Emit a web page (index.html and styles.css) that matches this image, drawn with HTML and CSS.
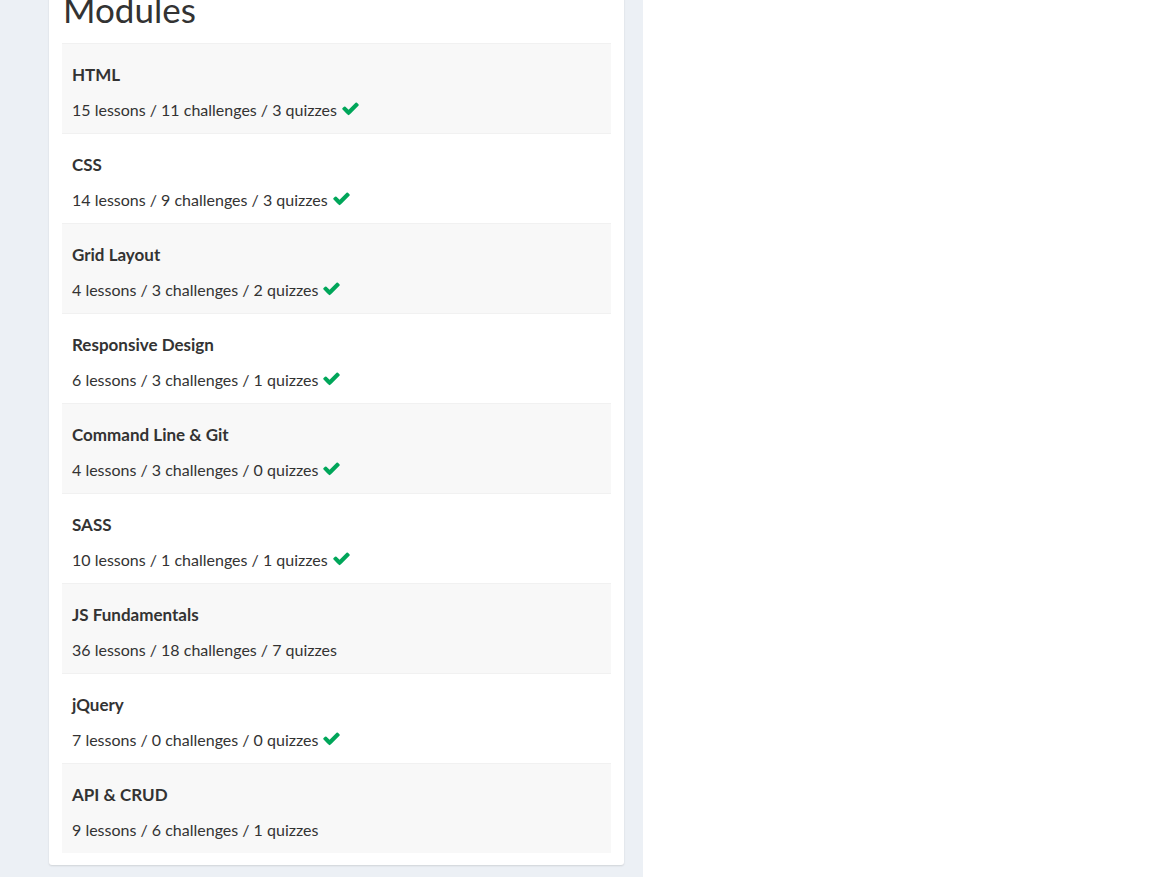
FILE: index.html
```html
<!DOCTYPE html>
<html>
<head>
<meta charset="utf-8">
<link rel="stylesheet" href="styles.css">
</head>
<body>
<div class="page">
  <div class="content">
    <div class="box">
      <h1 class="title">Modules</h1>
      <ul class="modules">
        <li class="module"><h4>HTML</h4><p>15 lessons / 11 challenges / 3 quizzes <svg class="check" viewBox="0 0 1792 1792"><path d="M1671 566q0 40-28 68l-724 724-136 136q-28 28-68 28t-68-28l-136-136-362-362q-28-28-28-68t28-68l136-136q28-28 68-28t68 28l294 295 656-657q28-28 68-28t68 28l136 136q28 28 28 68z"/></svg></p></li>
        <li class="module"><h4>CSS</h4><p>14 lessons / 9 challenges / 3 quizzes <svg class="check" viewBox="0 0 1792 1792"><path d="M1671 566q0 40-28 68l-724 724-136 136q-28 28-68 28t-68-28l-136-136-362-362q-28-28-28-68t28-68l136-136q28-28 68-28t68 28l294 295 656-657q28-28 68-28t68 28l136 136q28 28 28 68z"/></svg></p></li>
        <li class="module"><h4>Grid Layout</h4><p>4 lessons / 3 challenges / 2 quizzes <svg class="check" viewBox="0 0 1792 1792"><path d="M1671 566q0 40-28 68l-724 724-136 136q-28 28-68 28t-68-28l-136-136-362-362q-28-28-28-68t28-68l136-136q28-28 68-28t68 28l294 295 656-657q28-28 68-28t68 28l136 136q28 28 28 68z"/></svg></p></li>
        <li class="module"><h4>Responsive Design</h4><p>6 lessons / 3 challenges / 1 quizzes <svg class="check" viewBox="0 0 1792 1792"><path d="M1671 566q0 40-28 68l-724 724-136 136q-28 28-68 28t-68-28l-136-136-362-362q-28-28-28-68t28-68l136-136q28-28 68-28t68 28l294 295 656-657q28-28 68-28t68 28l136 136q28 28 28 68z"/></svg></p></li>
        <li class="module"><h4>Command Line &amp; Git</h4><p>4 lessons / 3 challenges / 0 quizzes <svg class="check" viewBox="0 0 1792 1792"><path d="M1671 566q0 40-28 68l-724 724-136 136q-28 28-68 28t-68-28l-136-136-362-362q-28-28-28-68t28-68l136-136q28-28 68-28t68 28l294 295 656-657q28-28 68-28t68 28l136 136q28 28 28 68z"/></svg></p></li>
        <li class="module"><h4>SASS</h4><p>10 lessons / 1 challenges / 1 quizzes <svg class="check" viewBox="0 0 1792 1792"><path d="M1671 566q0 40-28 68l-724 724-136 136q-28 28-68 28t-68-28l-136-136-362-362q-28-28-28-68t28-68l136-136q28-28 68-28t68 28l294 295 656-657q28-28 68-28t68 28l136 136q28 28 28 68z"/></svg></p></li>
        <li class="module"><h4>JS Fundamentals</h4><p>36 lessons / 18 challenges / 7 quizzes</p></li>
        <li class="module"><h4>jQuery</h4><p>7 lessons / 0 challenges / 0 quizzes <svg class="check" viewBox="0 0 1792 1792"><path d="M1671 566q0 40-28 68l-724 724-136 136q-28 28-68 28t-68-28l-136-136-362-362q-28-28-28-68t28-68l136-136q28-28 68-28t68 28l294 295 656-657q28-28 68-28t68 28l136 136q28 28 28 68z"/></svg></p></li>
        <li class="module"><h4>API &amp; CRUD</h4><p>9 lessons / 6 challenges / 1 quizzes</p></li>
      </ul>
    </div>
  </div>
  <div class="aside"></div>
</div>
</body>
</html>
```

FILE: styles.css
```css
html, body {
  margin: 0;
  padding: 0;
  background: #ffffff;
}
body {
  font-family: "Lato", "Liberation Sans", sans-serif;
  color: #333333;
  font-size: 16px;
}
.page {
  display: flex;
  height: 877px;
  overflow: hidden;
}
.content {
  width: 643px;
  flex: none;
  background: #ecf0f5;
  padding: 0 19px 0 49px;
  box-sizing: border-box;
}
.aside {
  flex: 1;
  background: #ffffff;
}
.box {
  background: #ffffff;
  border-radius: 0 0 3px 3px;
  box-shadow: 0 1px 2px rgba(0, 0, 0, 0.12);
  padding: 0 13px 12px;
  margin-top: -16px;
}
.title {
  margin: 0;
  padding-left: 1px;
  font-size: 35px;
  font-weight: 400;
  line-height: 50px;
  height: 59px;
  box-sizing: border-box;
}
.modules {
  list-style: none;
  margin: 0;
  padding: 0;
}
.module {
  height: 90px;
  box-sizing: border-box;
  border-top: 1px solid #f1f1f1;
  padding: 21px 10px 0;
}
.module:nth-child(odd) {
  background: #f8f8f8;
}
.module h4 {
  margin: 0;
  font-size: 17px;
  font-weight: 700;
  line-height: 20px;
}
.module p {
  margin: 15px 0 0;
  line-height: 20px;
  display: flex;
  align-items: center;
  gap: 4px;
}
.check {
  width: 19px;
  height: 19px;
  fill: #00a65a;
  margin-top: -3px;
}
```
